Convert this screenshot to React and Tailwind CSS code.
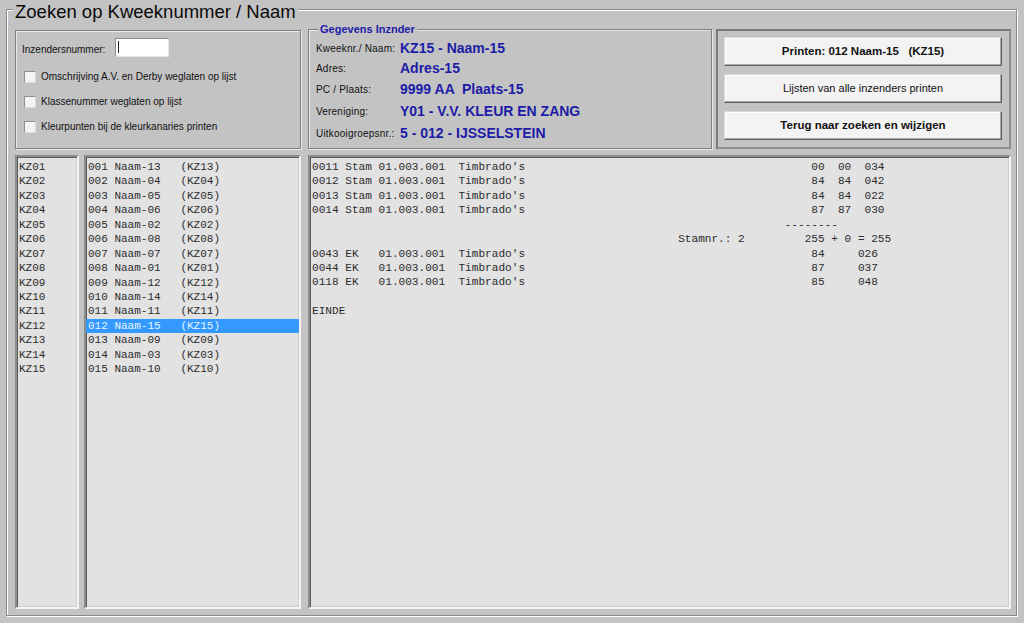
import React from "react";

const pad = (s, n) => s + " ".repeat(Math.max(0, n - s.length));

const textLines = [
  pad("0011 Stam 01.003.001  Timbrado's", 75) + "00  00  034",
  pad("0012 Stam 01.003.001  Timbrado's", 75) + "84  84  042",
  pad("0013 Stam 01.003.001  Timbrado's", 75) + "84  84  022",
  pad("0014 Stam 01.003.001  Timbrado's", 75) + "87  87  030",
  pad("", 71) + "--------",
  pad(pad("", 55) + "Stamnr.: 2", 74) + "255 + 0 = 255",
  pad("0043 EK   01.003.001  Timbrado's", 75) + "84     026",
  pad("0044 EK   01.003.001  Timbrado's", 75) + "87     037",
  pad("0118 EK   01.003.001  Timbrado's", 75) + "85     048",
  "",
  "EINDE",
];

const kzList = Array.from({ length: 15 }, (_, i) => "KZ" + String(i + 1).padStart(2, "0"));

const names = [
  ["13", "KZ13"],
  ["04", "KZ04"],
  ["05", "KZ05"],
  ["06", "KZ06"],
  ["02", "KZ02"],
  ["08", "KZ08"],
  ["07", "KZ07"],
  ["01", "KZ01"],
  ["12", "KZ12"],
  ["14", "KZ14"],
  ["11", "KZ11"],
  ["15", "KZ15"],
  ["09", "KZ09"],
  ["03", "KZ03"],
  ["10", "KZ10"],
].map(([n, kz], i) => `${String(i + 1).padStart(3, "0")} Naam-${n}   (${kz})`);

function Check({ label }) {
  return (
    <div className="flex items-center h-[25px]">
      <div className="ml-[8px] w-[12px] h-[12px] bg-[#f4f4f4] border border-t-[#8f8f8f] border-l-[#8f8f8f] border-r-[#dcdcdc] border-b-[#dcdcdc]" />
      <span className="ml-[5px] text-[10px] text-[#111]">{label}</span>
    </div>
  );
}

function Button({ children, className }) {
  return (
    <div
      className={
        "h-[29px] w-[278px] flex items-center justify-center bg-[#f3f3f3] border border-t-[#d8d8d8] border-l-[#d8d8d8] border-r-[#5e5e5e] border-b-[#5e5e5e] shadow-[inset_-1px_-1px_0_#a8a8a8,inset_1px_1px_0_#ffffff] text-[#111] " +
        className
      }
    >
      {children}
    </div>
  );
}

const sunken =
  "bg-[#e2e2e2] border-2 border-t-[#8c8c8c] border-l-[#8c8c8c] border-r-[#f4f4f4] border-b-[#f4f4f4] shadow-[inset_1px_1px_0_#5a5a5a,inset_-1px_-1px_0_#cfcfcf]";

export default function App() {
  return (
    <div className="w-[1024px] h-[623px] bg-[#c3c3c3] overflow-hidden font-['Liberation_Sans',Arial,sans-serif] pt-[9px] pl-[6px]">
      <div className="relative w-[1011px] h-[607px] border border-[#8a8a8a] shadow-[inset_1px_1px_0_#fff,1px_1px_0_#fff] pt-[18px] pl-[8px]">
        <div className="absolute left-[6px] top-[-9px] px-[2px] bg-[#c3c3c3] text-[18.5px] leading-[21px] text-[#0a0a0a]">
          Zoeken op Kweeknummer / Naam
        </div>

        {/* top row */}
        <div className="flex h-[121px]">
          {/* left panel */}
          <div className="mt-[2px] w-[286px] h-[119px] border border-[#7e7e7e] shadow-[inset_1px_1px_0_#e8e8e8,1px_1px_0_#e8e8e8] pt-[7px]">
            <div className="flex items-end h-[19px]">
              <span className="ml-[6px] text-[10px] text-[#111] leading-[14px]">Inzendersnummer:</span>
              <div className="relative ml-[10px] w-[54px] h-[19px] bg-white border border-t-[#8a8a8a] border-l-[#8a8a8a] border-r-[#e6e6e6] border-b-[#e6e6e6]">
                <div className="absolute left-[2px] top-[2px] w-[1px] h-[12px] bg-[#222]" />
              </div>
            </div>
            <div className="mt-[7px]">
              <Check label="Omschrijving A.V. en Derby weglaten op lijst" />
              <Check label="Klassenummer weglaten op lijst" />
              <Check label="Kleurpunten bij de kleurkanaries printen" />
            </div>
          </div>

          {/* middle group */}
          <div className="relative ml-[7px] mt-[1px] w-[404px] h-[120px] border border-[#7e7e7e] shadow-[inset_1px_1px_0_#e8e8e8,1px_1px_0_#e8e8e8] pt-[8px] pl-[7px]">
            <div className="absolute left-[9px] top-[-8px] px-[2px] bg-[#c3c3c3] text-[11px] leading-[14px] font-bold text-[#1c1ca6]">
              Gegevens Inznder
            </div>
            {[
              ["Kweeknr./ Naam:", "KZ15 - Naam-15", "h-[20px]"],
              ["Adres:", "Adres-15", "h-[20px]"],
              ["PC / Plaats:", "9999 AA  Plaats-15", "h-[22px]"],
              ["Vereniging:", "Y01 - V.V. KLEUR EN ZANG", "h-[22px]"],
              ["Uitkooigroepsnr.:", "5 - 012 - IJSSELSTEIN", "h-[22px]"],
            ].map(([l, v, h]) => (
              <div key={l} className={"flex items-center " + h}>
                <span className="w-[84px] text-[10px] text-[#111] whitespace-nowrap tracking-[0.2px]">{l}</span>
                <span className="text-[14px] font-bold text-[#1c1ca6] whitespace-pre">{v}</span>
              </div>
            ))}
          </div>

          {/* right panel */}
          <div className="ml-[4px] mt-[1px] w-[295px] h-[120px] border-2 border-t-[#7a7a7a] border-l-[#7a7a7a] border-r-[#8e8e8e] border-b-[#8e8e8e] pt-[6px] pl-[6px] flex flex-col gap-[8px]">
            <Button className="text-[11.5px] font-bold whitespace-pre">Printen: 012 Naam-15   (KZ15)</Button>
            <Button className="text-[11px]">Lijsten van alle inzenders printen</Button>
            <Button className="text-[11.5px] font-bold">Terug naar zoeken en wijzigen</Button>
          </div>
        </div>

        {/* bottom row */}
        <div className="flex mt-[6px] h-[454px] font-['Liberation_Mono',monospace] text-[#2c2c2c]">
          <div className={"w-[64px] h-full pt-[3px] pl-[2px] text-[11px] leading-[14.43px] " + sunken}>
            {kzList.map((k) => (
              <div key={k} className="whitespace-pre">{k}</div>
            ))}
          </div>
          <div className={"ml-[5px] w-[217px] h-full pt-[3px] text-[11px] leading-[14.43px] " + sunken}>
            {names.map((n, i) => (
              <div
                key={n}
                className={
                  "whitespace-pre pl-[2px] " + (i === 11 ? "bg-[#3399ff] text-[#eaf4ff]" : "")
                }
              >
                {n}
              </div>
            ))}
          </div>
          <div className={"ml-[7px] w-[703px] h-full pt-[3px] pl-[2px] text-[11.1px] leading-[14.43px] " + sunken}>
            {textLines.map((t, i) => (
              <div key={i} className="whitespace-pre h-[14.43px]">{t}</div>
            ))}
          </div>
        </div>
      </div>
    </div>
  );
}
